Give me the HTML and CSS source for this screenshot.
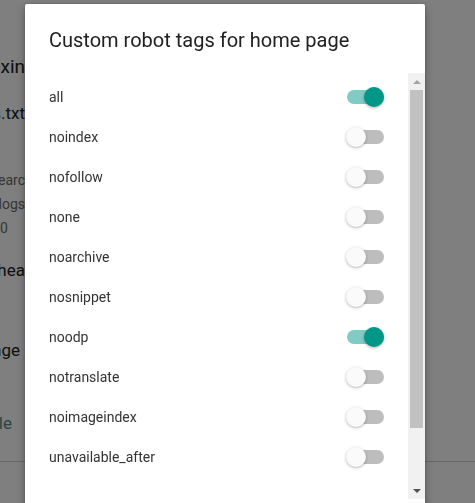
FILE: index.html
```html
<!DOCTYPE html>
<html>
<head>
<meta charset="utf-8">
<link rel="stylesheet" href="styles.css">
</head>
<body>
<div class="page">
  <div class="bgcol">
    <div class="bg-h">Crawlers and indexin</div>
    <div class="bg-t1">Enable custom robots.txt</div>
    <div class="bg-desc">
      <div>Custom robots.txt helps searc</div>
      <div>engines crawl your blogs</div>
      <div class="pad-0">2020</div>
    </div>
    <div class="bg-t2">Enable custom robots hea</div>
    <div class="bg-t3">Home page</div>
    <div class="bg-link">Enable</div>
  </div>
  <div class="bg-rule"></div>
</div>
<div class="overlay"></div>
<div class="dialog">
  <h2 class="title">Custom robot tags for home page</h2>
  <div class="body">
    <div class="list">
      <div class="row"><span>all</span><span class="switch on"><span class="track"></span><span class="thumb"></span></span></div>
      <div class="row"><span>noindex</span><span class="switch"><span class="track"></span><span class="thumb"></span></span></div>
      <div class="row"><span>nofollow</span><span class="switch"><span class="track"></span><span class="thumb"></span></span></div>
      <div class="row"><span>none</span><span class="switch"><span class="track"></span><span class="thumb"></span></span></div>
      <div class="row"><span>noarchive</span><span class="switch"><span class="track"></span><span class="thumb"></span></span></div>
      <div class="row"><span>nosnippet</span><span class="switch"><span class="track"></span><span class="thumb"></span></span></div>
      <div class="row"><span>noodp</span><span class="switch on"><span class="track"></span><span class="thumb"></span></span></div>
      <div class="row"><span>notranslate</span><span class="switch"><span class="track"></span><span class="thumb"></span></span></div>
      <div class="row"><span>noimageindex</span><span class="switch"><span class="track"></span><span class="thumb"></span></span></div>
      <div class="row"><span>unavailable_after</span><span class="switch"><span class="track"></span><span class="thumb"></span></span></div>
    </div>
    <div class="scrollbar">
      <div class="sb-btn"><span class="arrow-up"></span></div>
      <div class="sb-track"><div class="sb-thumb"></div></div>
      <div class="sb-btn"><span class="arrow-down"></span></div>
    </div>
  </div>
</div>
</body>
</html>
```
FILE: styles.css
```css
html, body {
  margin: 0;
  padding: 0;
  height: 100%;
  overflow: hidden;
}
body {
  background: #ffffff;
  font-family: Roboto, "Liberation Sans", sans-serif;
}
.page {
  height: 503px;
  padding-top: 55px;
  box-sizing: border-box;
}
.bgcol {
  width: 300px;
  margin-left: -275px;
  text-align: right;
  white-space: nowrap;
  color: #202124;
}
.bg-h {
  font-size: 19px;
  line-height: 24px;
}
.bg-t1 {
  font-size: 17px;
  line-height: 24px;
  margin-top: 22px;
}
.bg-desc {
  font-size: 14px;
  line-height: 24px;
  color: #6b6b6b;
  margin-top: 43px;
}
.pad-0 { padding-right: 17px; }
.bg-t2 {
  font-size: 17px;
  line-height: 24px;
  margin-top: 18px;
}
.bg-t3 {
  font-size: 17px;
  line-height: 24px;
  margin-top: 56px;
  padding-right: 5px;
}
.bg-link {
  font-size: 17px;
  line-height: 24px;
  margin-top: 49px;
  padding-right: 13px;
  color: #4f8a88;
}
.bg-rule {
  margin-top: 26px;
  height: 1px;
  background: #d0d0d0;
}
.overlay {
  position: fixed;
  inset: 0;
  background: rgba(0, 0, 0, 0.5);
}
.dialog {
  position: absolute;
  left: 25px;
  top: 4px;
  width: 400px;
  height: 520px;
  background: #ffffff;
  border-radius: 2px;
  box-shadow: 0 4px 10px rgba(0, 0, 0, 0.3), 0 0 3px rgba(0, 0, 0, 0.2);
  display: flex;
  flex-direction: column;
}
.title {
  margin: 0;
  padding: 24px 24px 0 24px;
  height: 69px;
  box-sizing: border-box;
  font-size: 20px;
  font-weight: 400;
  line-height: 24px;
  color: #212121;
}
.body {
  display: flex;
  height: 426px;
}
.list {
  flex: 1;
  padding-top: 4px;
}
.row {
  height: 40px;
  display: flex;
  align-items: center;
  justify-content: space-between;
  padding: 0 24px;
  font-size: 14px;
  color: #333333;
}
.switch {
  position: relative;
  width: 38px;
  height: 20px;
}
.track {
  position: absolute;
  left: 1px;
  right: 0;
  top: 3px;
  height: 14px;
  border-radius: 7px;
  background: #bdbdbd;
}
.thumb {
  position: absolute;
  top: 0;
  left: 0;
  width: 20px;
  height: 20px;
  border-radius: 50%;
  background: #fafafa;
  box-shadow: 0 1px 3px rgba(0, 0, 0, 0.3);
}
.switch.on .track { background: #80cbc4; }
.switch.on .thumb {
  left: auto;
  right: 0;
  background: #009688;
}
.scrollbar {
  width: 17px;
  background: #f1f1f1;
  display: flex;
  flex-direction: column;
}
.sb-btn {
  height: 17px;
  display: flex;
  align-items: center;
  justify-content: center;
}
.arrow-up {
  width: 0;
  height: 0;
  border-left: 4px solid transparent;
  border-right: 4px solid transparent;
  border-bottom: 4px solid #a3a3a3;
}
.arrow-down {
  width: 0;
  height: 0;
  border-left: 4px solid transparent;
  border-right: 4px solid transparent;
  border-top: 4px solid #505050;
}
.sb-track {
  flex: 1;
  padding: 0 2px;
}
.sb-thumb {
  height: 338px;
  background: #c1c1c1;
}
```
